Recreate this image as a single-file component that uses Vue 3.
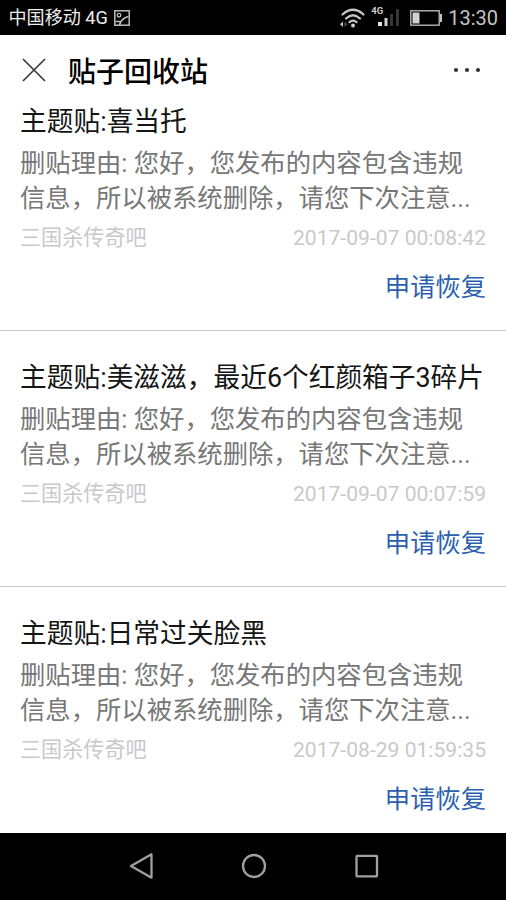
<script setup>
const reason = '删贴理由: 您好，您发布的内容包含违规信息，所以被系统删除，请您下次注意...'
const posts = [
  { title: '主题贴:喜当托', time: '2017-09-07 00:08:42' },
  { title: '主题贴:美滋滋，最近6个红颜箱子3碎片', time: '2017-09-07 00:07:59' },
  { title: '主题贴:日常过关脸黑', time: '2017-08-29 01:59:35' },
]
</script>

<template>
  <div class="screen">
    <div class="status">
      <span class="carrier">中国移动 4G</span>
      <svg class="shot" width="16" height="16" viewBox="0 0 16 16" fill="none" stroke="#bcbcbc">
        <rect x=".8" y=".8" width="14.400" height="14.400" stroke-width="1.500" />
        <circle cx="5" cy="5.2" r="1.800" stroke-width="1.300" />
        <path d="M5.500 15Q7 8.500 14.500 6.500M1.500 11.500L7 11.500" stroke-width="1.500" />
      </svg>
      <svg class="wifi" width="28" height="22" viewBox="0 0 28 22">
        <g fill="none" stroke="#c6c6c6" stroke-width="2.2" stroke-linecap="round">
          <path d="M3.5 7.500Q14 -2 24.500 7.500" />
          <path d="M7 11.500Q14 5 21 11.500" />
          <path d="M10.500 15.200Q14 12.200 17.500 15.200" />
        </g>
        <circle cx="14" cy="18.500" r="1.900" fill="#d2d2d2" />
        <path d="M4 14.500V20L1 17.300Z" fill="#c6c6c6" />
        <path d="M5.500 14.500V20L8.500 17.300Z" fill="#505050" />
      </svg>
      <div class="signal">
        <span class="net">4G</span>
        <svg width="22" height="18" viewBox="0 0 22 18">
          <rect x="1" y="13" width="4" height="4" fill="#e0e0e0" />
          <rect x="7.500" y="9" width="3" height="8" fill="#d0d0d0" />
          <rect x="13" y="5" width="3" height="12" fill="#34383c" />
          <rect x="19" y="0" width="3" height="17" fill="#34383c" />
        </svg>
      </div>
      <svg class="battery" width="33" height="16" viewBox="0 0 33 16">
        <rect x=".8" y=".8" width="28.400" height="14.400" fill="none" stroke="#c4c4c4" stroke-width="1.300" />
        <rect x="2.500" y="2.500" width="7" height="11" fill="#d0d0d0" />
        <rect x="30" y="4" width="2" height="8" fill="#c4c4c4" />
      </svg>
      <span class="clock">13:30</span>
    </div>

    <header class="header">
      <svg width="24" height="24" viewBox="0 0 24 24" fill="none" stroke="#3c3c3c" stroke-width="1.700">
        <path d="M1 1L23 23M23 1L1 23" />
      </svg>
      <h1>贴子回收站</h1>
      <svg class="more" width="28" height="6" viewBox="0 0 28 6" fill="#333">
        <circle cx="3" cy="3" r="2.100" />
        <circle cx="14" cy="3" r="2.100" />
        <circle cx="25" cy="3" r="2.100" />
      </svg>
    </header>

    <main class="list">
      <article v-for="post in posts" :key="post.time" class="post">
        <h2>{{ post.title }}</h2>
        <p class="reason">{{ reason }}</p>
        <div class="meta">
          <span>三国杀传奇吧</span>
          <time>{{ post.time }}</time>
        </div>
        <a class="restore">申请恢复</a>
      </article>
    </main>

    <nav class="nav">
      <svg width="26" height="28" viewBox="0 0 26 28"><path d="M3 14L23.500 2.300V25.700Z" /></svg>
      <svg width="26" height="28" viewBox="0 0 26 28"><circle cx="13" cy="14" r="11" /></svg>
      <svg width="26" height="28" viewBox="0 0 26 28"><rect x="2.500" y="3.800" width="20.500" height="20.500" rx=".5" /></svg>
    </nav>
  </div>
</template>

<style>
body {
  margin: 0;
  background: #fff;
}
</style>

<style scoped>
.screen {
  display: flex;
  flex-direction: column;
  height: 900px;
  overflow: hidden;
  background: #fff;
  font-family: Roboto, "Noto Sans CJK SC", sans-serif;
}
.status {
  display: flex;
  flex: none;
  align-items: center;
  box-sizing: border-box;
  height: 35px;
  padding: 0 8px 0 8.500px;
  background: #000;
  color: #eee;
}
.carrier {
  font-size: 18.100px;
  line-height: 34px;
  white-space: nowrap;
}
.shot {
  margin-left: 6px;
}
.wifi {
  margin-left: auto;
}
.signal {
  display: flex;
  align-items: flex-start;
  width: 29px;
  height: 23px;
  margin-left: 4px;
}
.net {
  width: 6px;
  color: #ccc;
  font-size: 9.500px;
  font-weight: 700;
  line-height: 10px;
}
.signal svg {
  flex: none;
  margin: 3px 0 0;
}
.battery {
  margin-left: 10px;
}
.clock {
  margin-left: 5px;
  color: #c4c4c4;
  font-size: 20px;
  line-height: 35px;
  padding-top: 2px;
}
.header {
  display: flex;
  flex: none;
  align-items: center;
  box-sizing: border-box;
  height: 69px;
  padding: 1px 25px 0 22px;
}
h1,
h2,
p {
  margin: 0;
  font-weight: 400;
}
h1 {
  margin-left: 22px;
  padding-top: 5px;
  color: #000;
  font-size: 28px;
  font-weight: 500;
  line-height: 40px;
}
.more {
  margin: 0 0 0 auto;
}
.list {
  flex: 1;
  min-height: 0;
  overflow: hidden;
}
.post {
  box-sizing: border-box;
  height: 256px;
  padding: 29px 20px 0;
  border-bottom: 1px solid #c8c8c8;
}
.post:first-child {
  height: 227px;
  padding-top: 0;
}
h2 {
  color: #151515;
  font-size: 26.730px;
  line-height: 36px;
  white-space: nowrap;
}
.reason {
  margin-top: 6px;
  color: #777;
  font-size: 25.33px;
  line-height: 35px;
}
.meta {
  display: flex;
  justify-content: space-between;
  margin-top: 7px;
  color: #c8c9cb;
  font-size: 21.100px;
  line-height: 30px;
}
.restore {
  display: block;
  margin-top: 20px;
  color: #2b5fb0;
  font-size: 25.33px;
  line-height: 30px;
  text-align: right;
}
.nav {
  display: flex;
  flex: none;
  align-items: center;
  justify-content: center;
  gap: 87px;
  box-sizing: border-box;
  height: 67px;
  padding: 0 0 1px 1px;
  background: #000;
}
.nav svg {
  fill: none;
  stroke: #a0a0a0;
  stroke-width: 2.300;
  stroke-linejoin: round;
}
</style>
